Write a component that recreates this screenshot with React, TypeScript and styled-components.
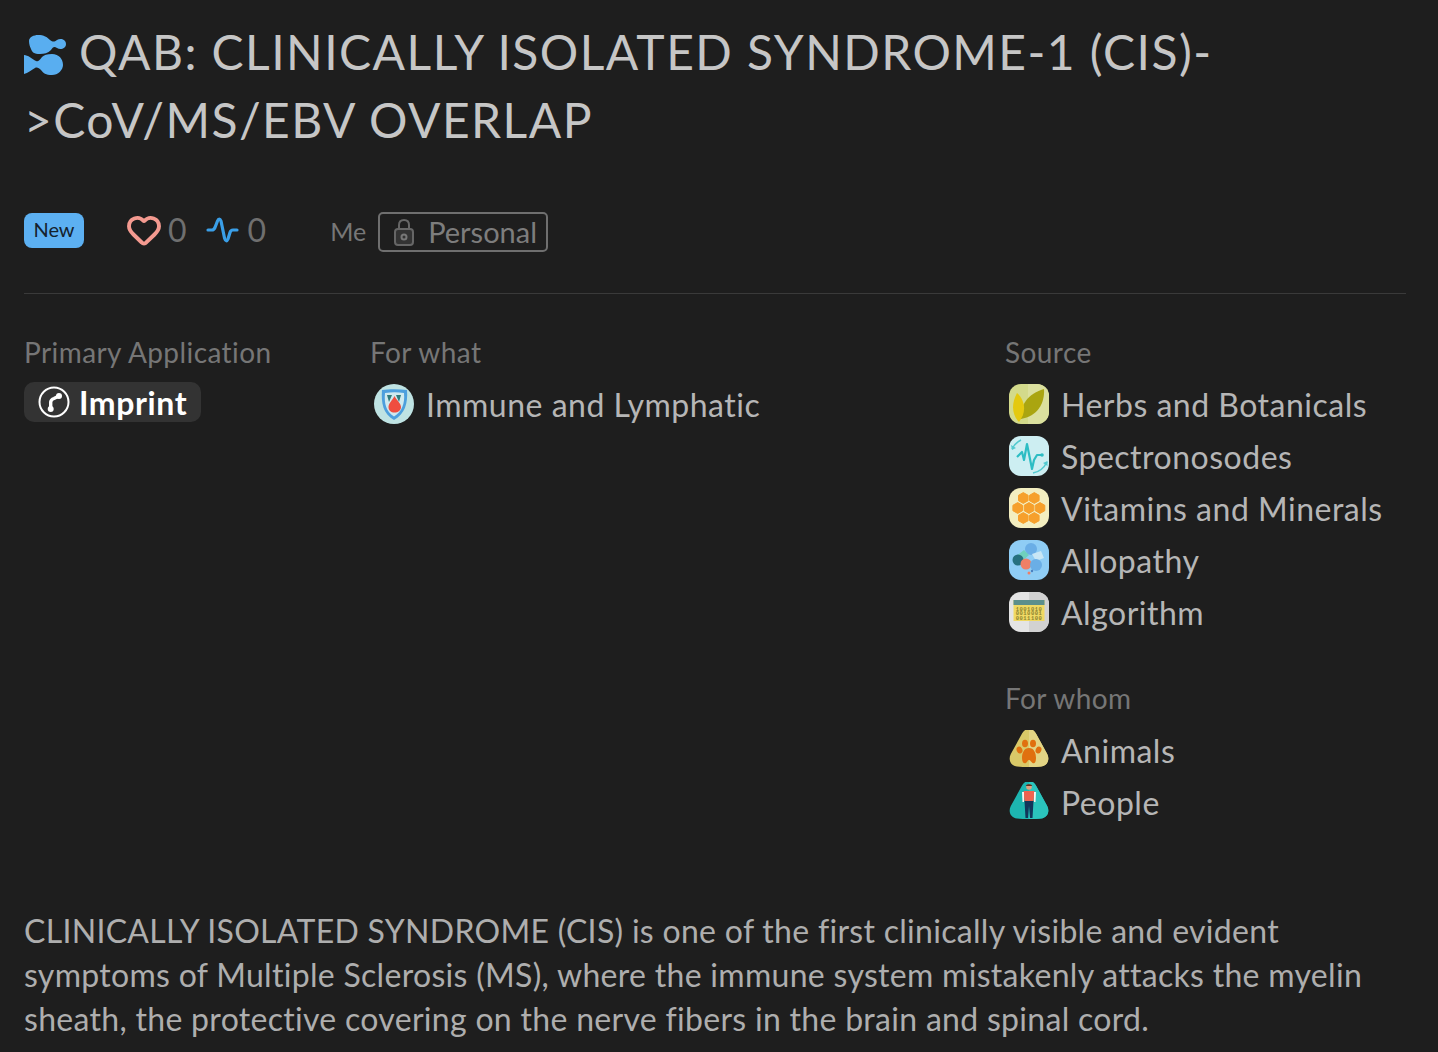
import React from 'react'
import styled, {createGlobalStyle} from 'styled-components'
import {Heart} from 'lucide-react'

const GlobalStyle = createGlobalStyle`
html, body {
  margin: 0;
  padding: 0;
  background: #1e1e1e;
}
body {
  font-family: 'Lato', 'Open Sans', sans-serif;
}
`

const Squircle = ({fill, children}: {fill: string; children: React.ReactNode}) => (
    <IconSvg viewBox="0 0 40 40">
        <rect width="40" height="40" rx="12" fill={fill}/>
        {children}
    </IconSvg>
)

const TRIANGLE = 'M20 1C16.500 1 14.500 3 12.500 6.500L1.800 26C-1 31.500 1.500 38 8 38.500C15 39.300 25 39.300 32 38.500C38.500 38 41 31.500 38.200 26L27.500 6.500C25.500 3 23.500 1 20 1Z'
const TRIANGLE_RIGHT = 'M20 1C23.500 1 25.500 3 27.500 6.500L38.200 26C41 31.500 38.500 38 32 38.500C28 39 24 39.100 20 39.100Z'

const HerbsIcon = () => (
    <Squircle fill="#d3da8b">
        <path d="M19 0h9a12 12 0 0 1 12 12v16a12 12 0 0 1-12 12h-9z" fill="#dbe09e"/>
        <path d="M12 35C11 22 18 10 35 5C36 20 28 32 12 35Z" fill="#aaa510"/>
        <path d="M10 38C3 31 2 20 8 9C16 16 18 28 10 38Z" fill="#e4c90f"/>
    </Squircle>
)

const SpectroIcon = () => (
    <Squircle fill="#cdeef2">
        <path d="M8 21L13 16L15 24L18 8L23 33L25 24L28 19H33" fill="none" stroke="#2dbdc4" strokeWidth="2.200" strokeLinejoin="round"/>
        <path d="M3 13C5 9 8 6 12 4M24 37C30 36 35 32 38 26" fill="none" stroke="#52c9cf" strokeWidth="1.600"/>
        <path d="M2 9L3 14L7 12ZM34 27L38.500 25L38.500 30Z" fill="#52c9cf"/>
        <circle cx="33" cy="19" r="1.800" fill="#2dbdc4"/>
    </Squircle>
)

const HEX: [number, number][] = [[14.300, 10], [25.300, 10], [8.700, 20], [20, 20], [31, 20], [14.300, 30], [25.300, 30]]

const VitaminsIcon = () => (
    <Squircle fill="#f3eec0">
        {HEX.map(([x, y]) => (
            <polygon
                key={`${x}-${y}`}
                points={`${x},${y - 5.400} ${x + 4.800},${y - 2.700} ${x + 4.800},${y + 2.700} ${x},${y + 5.400} ${x - 4.800},${y + 2.700} ${x - 4.800},${y - 2.700}`}
                fill="#f6a02c"
                stroke="#f6a02c"
                strokeWidth="1"
                strokeLinejoin="round"
            />
        ))}
    </Squircle>
)

const AllopathyIcon = () => (
    <Squircle fill="#8fcdf5">
        <circle cx="22" cy="9" r="6" fill="#6aaee6"/>
        <path d="M23 14L32 11L35 18L27 21Z" fill="#c8e6f5"/>
        <path d="M6 17L15 10L20 15L11 23Z" fill="#6fd0bd"/>
        <circle cx="9" cy="20" r="5.500" fill="#27707f"/>
        <circle cx="17" cy="24" r="5.500" fill="#ef7f66"/>
        <circle cx="27" cy="25" r="6" fill="#6aaee6"/>
        <circle cx="20" cy="33" r="1.500" fill="#ef7f66"/>
        <circle cx="23" cy="31" r="1.200" fill="#4a80c0"/>
    </Squircle>
)

const AlgorithmIcon = () => (
    <Squircle fill="#e4e4e4">
        <path d="M20 0h8a12 12 0 0 1 12 12v16a12 12 0 0 1-12 12h-8z" fill="#d2d2d2"/>
        <rect x="4.500" y="8" width="31" height="21" fill="#f0d964"/>
        <rect x="4.500" y="8" width="31" height="5" fill="#5c8f8c"/>
        <Digits x="20" y="18.500">1001010</Digits>
        <Digits x="20" y="23.200">0010001</Digits>
        <Digits x="20" y="28">0011100</Digits>
    </Squircle>
)

const AnimalsIcon = () => (
    <IconSvg viewBox="0 2 40 40">
        <path d={TRIANGLE} fill="#d9c968"/>
        <path d={TRIANGLE_RIGHT} fill="#e3d585"/>
        <g fill="#e0700f">
            <ellipse cx="10.500" cy="22" rx="2.800" ry="3.500" transform="rotate(-25 10.500 22)"/>
            <ellipse cx="16" cy="15.500" rx="3" ry="3.800"/>
            <ellipse cx="24" cy="15.500" rx="3" ry="3.800"/>
            <ellipse cx="29.500" cy="22" rx="2.800" ry="3.500" transform="rotate(25 29.500 22)"/>
            <path d="M20 20C15 20 13 25 13 30C13 34.500 15 36 17 35C18.500 34 18.500 32 20 32C21.500 32 22 34 23.500 35C25.500 36 27 34.500 27 30C27 25 25 20 20 20Z"/>
        </g>
    </IconSvg>
)

const PeopleIcon = () => (
    <IconSvg viewBox="0 2 40 40">
        <path d={TRIANGLE} fill="#1db5b0"/>
        <path d={TRIANGLE_RIGHT} fill="#2bc4bd"/>
        <circle cx="20" cy="7" r="2.800" fill="#e0a080"/>
        <path d="M16.800 6C17 3.500 23 3.500 23.200 6Z" fill="#5a3020"/>
        <path d="M14.500 11H25.500L24.500 21H15.500Z" fill="#f0624f"/>
        <path d="M13 12H15V22H13.500ZM25 12H27L26.500 22H25Z" fill="#f5f5f0"/>
        <path d="M15.500 21H24.500L23.500 38H21L20 26L19 38H16.500Z" fill="#12355a"/>
    </IconSvg>
)

const ImmuneIcon = () => (
    <IconSvg viewBox="0 0 40 40">
        <circle cx="20" cy="20" r="20" fill="#bfe3e3"/>
        <path d="M8 6C15 5 25 5 33 6C34 19 31 30 20 36C9 30 7 19 8 6Z" fill="#4d9fdd"/>
        <path d="M11 9C17 8 24 8 30 9C31 19 28 28 20 32.500C12 28 10 19 11 9Z" fill="#cfe9ef"/>
        <path d="M13 11H18L15 18ZM27 11H22L25 18Z" fill="#2e7a7a"/>
        <path d="M20.500 12C22.500 16 27 19.500 27 23C27 26.500 24 28.500 20.500 28.500C17 28.500 14.500 26.500 14.500 23C14.500 19.500 18.500 16 20.500 12Z" fill="#ef4d3f"/>
    </IconSvg>
)

const ImprintIcon = () => (
    <svg width="32" height="32" viewBox="0 0 32 32" fill="none">
        <circle cx="16" cy="16" r="14.500" stroke="#fff" strokeWidth="2"/>
        <path d="M12.700 23V16Q13 13.500 16 12.500L21 10" stroke="#fff" strokeWidth="3.400" strokeLinecap="round"/>
        <circle cx="12.700" cy="23" r="3" fill="#fff"/>
        <circle cx="21" cy="10" r="3" fill="#fff"/>
    </svg>
)

const Logo = () => (
    <LogoSvg viewBox="0 0 42 40">
        <path d="M5 6C5 2 10 0 14 0C20 0 23 2 26 5C29 7 30 7 33 5C36 3 42 4 42 9C42 14 36 15 33 13C30 11 29 12 27 15C24 18 20 19 16 19C10 19 8 17 7 14C6 12 5 9 5 6Z" fill="#59aef0"/>
        <path d="M0 20C4 20 8 24 12 26C14 27 15 26 18 22C20 20 23 19 28 19C35 19 39 24 39 30C39 35 34 40 28 40C22 40 19 38 17 35C15 33 13 32 11 33C7 35 4 38 0 39Z" fill="#59aef0"/>
    </LogoSvg>
)

const ActivityWave = () => (
    <svg width="34" height="28" viewBox="0 0 34 28" fill="none">
        <path d="M3 14H7C8.500 14 9.300 13 10 11.500L12.500 5C13.500 2.500 15 2.500 16 5L19.500 22C20.500 25.500 22 25.500 23 23L25 16.500C25.500 14.800 26.500 14 28 14H32" stroke="#3a9fe8" strokeWidth="3.200" strokeLinecap="round" strokeLinejoin="round"/>
    </svg>
)

const LockIcon = () => (
    <svg width="22" height="28" viewBox="0 0 22 28" fill="none">
        <path d="M6 12V7C6 4 8 2 11 2C14 2 16 4 16 7V12" stroke="#666" strokeWidth="2"/>
        <rect x="2" y="11" width="18" height="16" rx="3" fill="#333" stroke="#666" strokeWidth="2"/>
        <circle cx="11" cy="19" r="2.500" stroke="#777" strokeWidth="2"/>
    </svg>
)

const SOURCES = [
    {icon: <HerbsIcon/>, label: 'Herbs and Botanicals'},
    {icon: <SpectroIcon/>, label: 'Spectronosodes'},
    {icon: <VitaminsIcon/>, label: 'Vitamins and Minerals'},
    {icon: <AllopathyIcon/>, label: 'Allopathy'},
    {icon: <AlgorithmIcon/>, label: 'Algorithm'},
]

const AUDIENCE = [
    {icon: <AnimalsIcon/>, label: 'Animals'},
    {icon: <PeopleIcon/>, label: 'People'},
]

export default function App() {
    return (
        <Page>
            <GlobalStyle/>
            <Title><Logo/>QAB: CLINICALLY ISOLATED SYNDROME-1 (CIS)-&gt;CoV/MS/EBV OVERLAP</Title>
            <MetaRow>
                <NewBadge>New</NewBadge>
                <Counter $gap="6px" $left="42px">
                    <Heart size={36} color="#f49a90" strokeWidth={2.600}/>
                    <CountValue>0</CountValue>
                </Counter>
                <Counter $gap="9px" $left="18px">
                    <ActivityWave/>
                    <CountValue>0</CountValue>
                </Counter>
                <Owner>Me</Owner>
                <Visibility><LockIcon/>Personal</Visibility>
            </MetaRow>
            <Divider/>
            <Columns>
                <div>
                    <Label>Primary Application</Label>
                    <Pill><ImprintIcon/>Imprint</Pill>
                </div>
                <div>
                    <Label>For what</Label>
                    <Item><ImmuneIcon/>Immune and Lymphatic</Item>
                </div>
                <div>
                    <Label>Source</Label>
                    {SOURCES.map(s => <Item key={s.label}>{s.icon}{s.label}</Item>)}
                    <SecondLabel>For whom</SecondLabel>
                    {AUDIENCE.map(s => <Item key={s.label}>{s.icon}{s.label}</Item>)}
                </div>
            </Columns>
            <Description>
                CLINICALLY ISOLATED SYNDROME (CIS) is one of the first clinically visible and evident symptoms of Multiple Sclerosis (MS), where the immune system mistakenly attacks the myelin sheath, the protective covering on the nerve fibers in the brain and spinal cord.
            </Description>
        </Page>
    )
}

const Page = styled.div`
height: 1052px;
box-sizing: border-box;
overflow: hidden;
padding: 18px 32px 0 24px;
background: #1e1e1e;
`

const Title = styled.h1`
margin: 0;
font-size: 48px;
line-height: 68px;
font-weight: 400;
letter-spacing: 1.45px;
color: #c6c6c6;
`

const LogoSvg = styled.svg`
width: 42px;
height: 40px;
margin-right: 13px;
vertical-align: -5px;
`

const MetaRow = styled.div`
display: flex;
align-items: center;
height: 40px;
margin-top: 57px;
`

const NewBadge = styled.div`
width: 60px;
height: 35px;
margin-bottom: 2px;
border-radius: 8px;
background: #5cb0f2;
color: #14222e;
font-size: 20px;
line-height: 33px;
text-align: center;
`

const Counter = styled.div<{$gap: string; $left: string}>`
display: flex;
align-items: center;
gap: ${p => p.$gap};
margin-left: ${p => p.$left};
margin-bottom: 3px;
`

const CountValue = styled.span`
font-size: 32px;
color: #6f6f6f;
`

const Owner = styled.span`
margin-left: 64px;
font-size: 25px;
color: #777;
`

const Visibility = styled.div`
display: flex;
align-items: center;
gap: 13px;
box-sizing: border-box;
height: 40px;
margin-top: 2px;
margin-left: 12px;
padding: 0 9px 0 13px;
border: 2px solid #6f6f6f;
border-radius: 5px;
font-size: 29px;
line-height: 34px;
color: #7d7d7d;
`

const Divider = styled.hr`
height: 1px;
margin: 42px 0 0;
border: 0;
background: #3a3a3a;
`

const Columns = styled.div`
display: grid;
grid-template-columns: 346px 635px 1fr;
margin-top: 40px;
`

const Label = styled.div`
height: 36px;
margin-bottom: 8px;
font-size: 28px;
line-height: 36px;
letter-spacing: 0.42px;
color: #767676;
`

const SecondLabel = styled(Label)`
margin-top: 42px;
`

const Pill = styled.div`
display: inline-flex;
align-items: center;
gap: 9px;
box-sizing: border-box;
height: 40px;
margin-top: 4px;
padding: 0 14px 0 14px;
border-radius: 10px;
background: #333;
color: #fff;
font-size: 32px;
font-weight: 700;
letter-spacing: 0.6px;
`

const Item = styled.div`
display: flex;
align-items: center;
gap: 12px;
height: 52px;
padding-left: 4px;
font-size: 32px;
letter-spacing: 0.5px;
color: #b6b6b6;
`

const IconSvg = styled.svg`
width: 40px;
height: 40px;
flex-shrink: 0;
`

const Digits = styled.text`
font-family: 'Liberation Mono', monospace;
font-size: 5.500px;
font-weight: 700;
text-anchor: middle;
fill: #8d8430;
`

const Description = styled.p`
max-width: 1370px;
margin: 81px 0 0;
font-size: 32px;
line-height: 44px;
letter-spacing: 0.3px;
color: #aeaeae;
`
